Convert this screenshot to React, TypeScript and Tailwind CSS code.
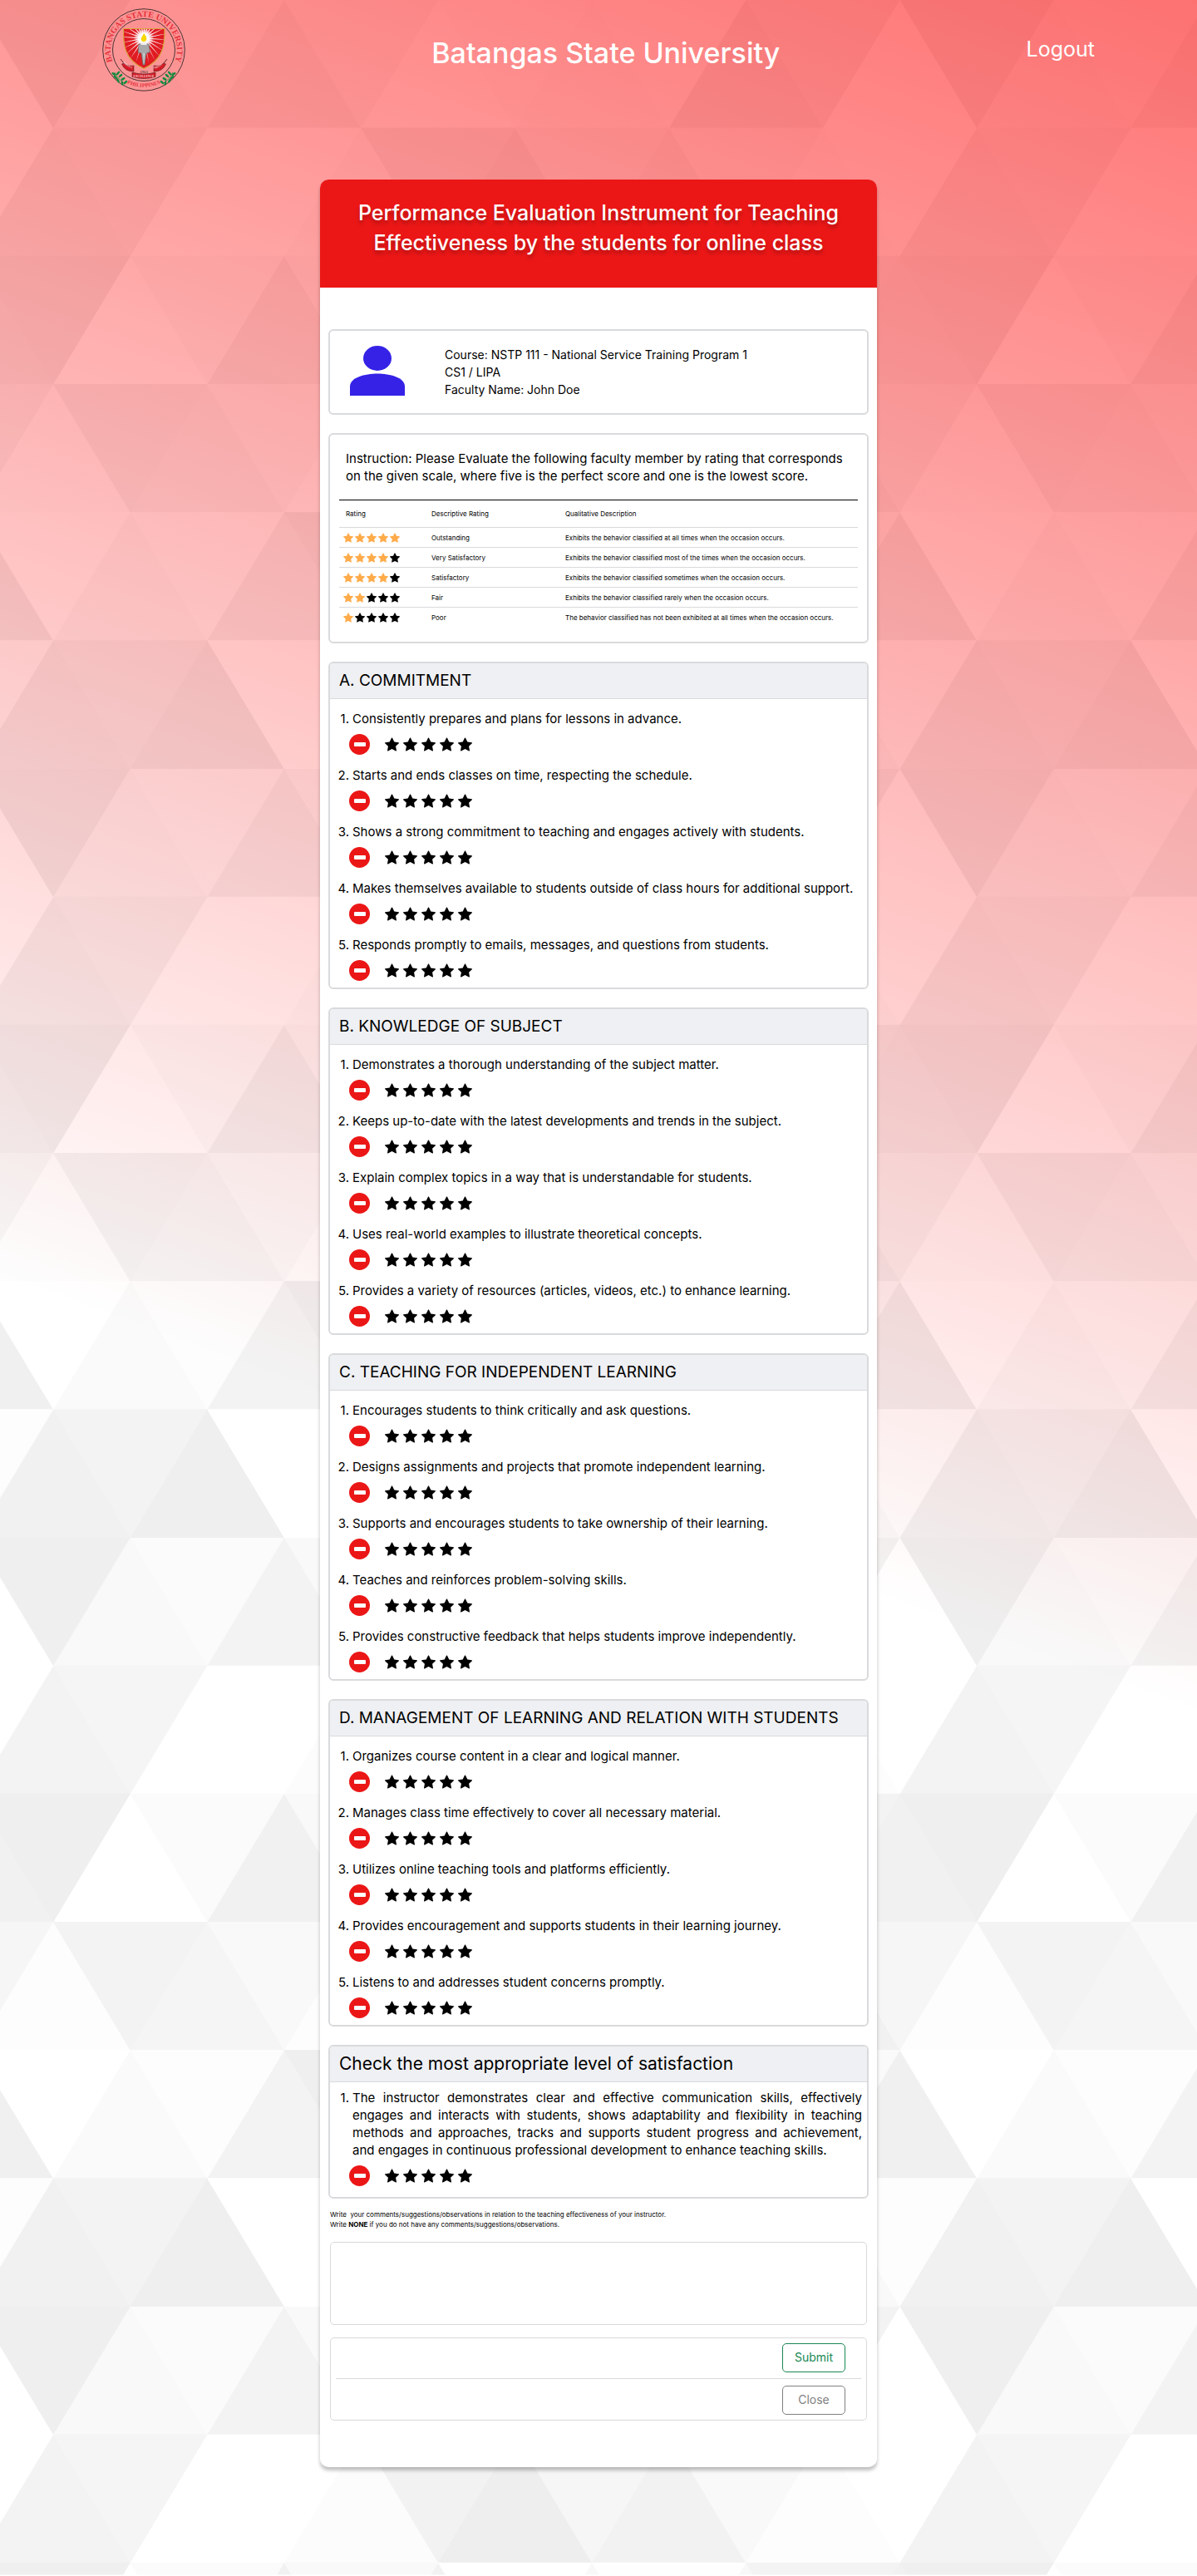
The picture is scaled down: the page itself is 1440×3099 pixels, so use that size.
import { useState } from "react";
import { BsStarFill } from "react-icons/bs";

const SHADES: string[][] = [
  ["#efefef", "#f9f9f9", "#fbfbfb", "#f3f3f3", "#f9f9f9", "#ffffff", "#fdfdfd", "#fbfbfb", "#fdfdfd", "#efefef", "#f3f3f3", "#ffffff"],
  ["#f3f3f3", "#f5f5f5", "#ffffff", "#ffffff", "#fcfcfc", "#f2f2f2", "#eeeeee", "#f6f6f6", "#f2f2f2", "#f9f9f9", "#fdfdfd", "#ffffff"],
  ["#efefef", "#ffffff", "#fbfbfb", "#f1f1f1", "#f9f9f9", "#f2f2f2", "#ffffff", "#f8f8f8", "#fefefe", "#f8f8f8", "#f3f3f3", "#f1f1f1"],
  ["#fdfdfd", "#f3f3f3", "#f5f5f5", "#f9f9f9", "#fdfdfd", "#f6f6f6", "#f3f3f3", "#fafafa", "#f8f8f8", "#ffffff", "#f1f1f1", "#f6f6f6"],
  ["#ffffff", "#fafafa", "#fdfdfd", "#f3f3f3", "#efefef", "#fafafa", "#ffffff", "#f4f4f4", "#fbfbfb", "#f3f3f3", "#fafafa", "#f0f0f0"],
  ["#f1f1f1", "#f3f3f3", "#efefef", "#ffffff", "#ffffff", "#f6f6f6", "#f1f1f1", "#fafafa", "#f3f3f3", "#ffffff", "#f9f9f9", "#fdfdfd"],
];

const TILE_W = 1111;
const TILE_H = 925;
const HALF = TILE_W / 12;
const ROW = TILE_H / 6;

function trianglePoints(row: number, col: number) {
  const x = HALF * col;
  const top = ROW * row;
  const bottom = top + ROW;
  const pointsDown = (row + col) % 2 === 0;
  return pointsDown
    ? `${x},${top} ${x + 2 * HALF},${top} ${x + HALF},${bottom}`
    : `${x},${bottom} ${x + 2 * HALF},${bottom} ${x + HALF},${top}`;
}

function Backdrop() {
  return (
    <div className="absolute inset-0 -z-10" aria-hidden="true">
      <svg className="h-full w-full">
        <defs>
          <pattern id="facets" x="-28" y="0" width={TILE_W} height={TILE_H} patternUnits="userSpaceOnUse">
            {SHADES.map((shades, row) =>
              [-1, ...shades.keys()].map((col) => {
                const fill = shades[(col + 12) % 12];
                return <polygon key={`${row}-${col}`} points={trianglePoints(row, col)} fill={fill} stroke={fill} />;
              }),
            )}
          </pattern>
        </defs>
        <rect width="100%" height="100%" fill="url(#facets)" />
      </svg>
      <div className="absolute inset-0 bg-[linear-gradient(200deg,rgba(255,0,0,0.55)_0px,rgba(255,0,0,0)_1940px)]" />
    </div>
  );
}

function Laurel({ flip }: { flip?: boolean }) {
  const leaves = [
    [14, 79, -60],
    [19, 78, 40],
    [16, 83, -50],
    [22, 81, 50],
    [19, 87, -30],
    [25, 85, 60],
    [24, 90, -10],
    [28, 89, 50],
  ];
  return (
    <g transform={flip ? "translate(100 0) scale(-1 1)" : undefined} fill="#0f8a3c">
      {leaves.map(([x, y, turn]) => (
        <ellipse key={`${x}-${y}`} cx={x} cy={y} rx="1.3" ry="2.9" transform={`rotate(${turn} ${x} ${y})`} />
      ))}
      <path d="M15 77 Q19 86 28 91" fill="none" stroke="#0f8a3c" strokeWidth="0.7" />
    </g>
  );
}

function Seal() {
  const rays = Array.from({ length: 24 }, (_, i) => (i * Math.PI) / 12 + 0.06);
  const shield = "M25.5 24.5 H75 C75.500 45 73 62 50 72.500 C27 62 25 45 25.500 24.500 Z";
  return (
    <svg viewBox="0 0 100 100" className="size-25 shrink-0" role="img" aria-label="Batangas State University seal">
      <defs>
        <path id="seal-top" d="M16.500 72 A40 40 0 1 1 83.500 72" />
        <path id="seal-bottom" d="M13 76 A46 46 0 0 0 87 76" />
        <path id="seal-ribbon-left" d="M25 65 Q31 72 38 72.500" />
        <path id="seal-ribbon-right" d="M62 72.500 Q69 72 75 65" />
        <clipPath id="seal-clip">
          <path d={shield} />
        </clipPath>
        <radialGradient id="seal-glow">
          <stop offset="0" stopColor="#fff" />
          <stop offset="0.5" stopColor="#fff" stopOpacity="0.9" />
          <stop offset="1" stopColor="#fff" stopOpacity="0" />
        </radialGradient>
      </defs>
      <circle cx="50" cy="50" r="49.300" fill="none" stroke="#4b3234" />
      <circle cx="50" cy="50" r="37.500" fill="none" stroke="#4b3234" />
      <text fill="#e5303a" fontSize="10" fontWeight="700" fontFamily="Liberation Serif, serif" textAnchor="middle">
        <textPath href="#seal-top" startOffset="50%">BATANGAS STATE UNIVERSITY</textPath>
      </text>
      <text fill="#e5303a" fontSize="6.500" fontWeight="700" fontFamily="Liberation Serif, serif" textAnchor="middle">
        <textPath href="#seal-bottom" startOffset="50%">PHILIPPINES</textPath>
      </text>
      <path d={shield} fill="#e01b22" />
      <g clipPath="url(#seal-clip)">
        {rays.map((a) => (
          <polygon
            key={a}
            fill="#fff"
            opacity="0.9"
            points={`${50 + 4 * Math.cos(a - 0.2)},${36 + 4 * Math.sin(a - 0.2)} ${50 + 30 * Math.cos(a)},${36 + 30 * Math.sin(a)} ${50 + 4 * Math.cos(a + 0.2)},${36 + 4 * Math.sin(a + 0.2)}`}
          />
        ))}
        <circle cx="50" cy="36" r="12" fill="url(#seal-glow)" />
      </g>
      <path d={shield} fill="none" stroke="#d9a441" strokeWidth="1.200" />
      <path d="M50 30 C52 33 54 35 53 38 C52 41 48 41 47 38 C46 35 49 34 50 30Z" fill="#f9d800" />
      <path d="M44 43 H56 L57 53 L53 54 L51 68 H49 L47 54 L43 53 Z" fill="#a9a9ab" stroke="#5f5f61" strokeWidth="0.600" />
      <path d="M46.500 41 H53.500 V44 H46.500 Z M49.600 54 H50.600 L50.200 66 H49.900 Z" fill="#efefef" />
      <path d="M22 61 Q28 71 38 69 L38 76 Q27 76 23.500 67 L26 66 Z M78 61 Q72 71 62 69 L62 76 Q73 76 76.500 67 L74 66 Z" fill="#d51a26" stroke="#3c1a1c" strokeWidth="0.500" />
      <path d="M36 77 Q50 81 64 77 L64 82.500 Q50 86.500 36 82.500 Z" fill="#d51a26" stroke="#3c1a1c" strokeWidth="0.500" />
      <text x="50" y="77.500" fill="#2e1a1c" fontSize="4.800" fontFamily="Liberation Serif, serif" textAnchor="middle">1903</text>
      <text x="50" y="83.200" fill="#f7dcdc" fontSize="3.600" fontWeight="700" fontFamily="Liberation Serif, serif" textAnchor="middle">EXCELLENCE</text>
      <text fill="#f7dcdc" fontSize="3" fontWeight="700" fontFamily="Liberation Serif, serif">
        <textPath href="#seal-ribbon-left">SERVICE</textPath>
      </text>
      <text fill="#f7dcdc" fontSize="3" fontWeight="700" fontFamily="Liberation Serif, serif">
        <textPath href="#seal-ribbon-right">VIRTUE</textPath>
      </text>
      <Laurel />
      <Laurel flip />
    </svg>
  );
}

const SCALE = [
  { stars: 5, name: "Outstanding", text: "Exhibits the behavior classified at all times when the occasion occurs." },
  { stars: 4, name: "Very Satisfactory", text: "Exhibits the behavior classified most of the times when the occasion occurs." },
  { stars: 4, name: "Satisfactory", text: "Exhibits the behavior classified sometimes when the occasion occurs." },
  { stars: 2, name: "Fair", text: "Exhibits the behavior classified rarely when the occasion occurs." },
  { stars: 1, name: "Poor", text: "The behavior classified has not been exhibited at all times when the occasion occurs." },
];

const SECTIONS = [
  {
    title: "A. COMMITMENT",
    questions: [
      "Consistently prepares and plans for lessons in advance.",
      "Starts and ends classes on time, respecting the schedule.",
      "Shows a strong commitment to teaching and engages actively with students.",
      "Makes themselves available to students outside of class hours for additional support.",
      "Responds promptly to emails, messages, and questions from students.",
    ],
  },
  {
    title: "B. KNOWLEDGE OF SUBJECT",
    questions: [
      "Demonstrates a thorough understanding of the subject matter.",
      "Keeps up-to-date with the latest developments and trends in the subject.",
      "Explain complex topics in a way that is understandable for students.",
      "Uses real-world examples to illustrate theoretical concepts.",
      "Provides a variety of resources (articles, videos, etc.) to enhance learning.",
    ],
  },
  {
    title: "C. TEACHING FOR INDEPENDENT LEARNING",
    questions: [
      "Encourages students to think critically and ask questions.",
      "Designs assignments and projects that promote independent learning.",
      "Supports and encourages students to take ownership of their learning.",
      "Teaches and reinforces problem-solving skills.",
      "Provides constructive feedback that helps students improve independently.",
    ],
  },
  {
    title: "D. MANAGEMENT OF LEARNING AND RELATION WITH STUDENTS",
    questions: [
      "Organizes course content in a clear and logical manner.",
      "Manages class time effectively to cover all necessary material.",
      "Utilizes online teaching tools and platforms efficiently.",
      "Provides encouragement and supports students in their learning journey.",
      "Listens to and addresses student concerns promptly.",
    ],
  },
];

const SATISFACTION_LINES = [
  "The instructor demonstrates clear and effective communication skills, effectively",
  "engages and interacts with students, shows adaptability and flexibility in teaching",
  "methods and approaches, tracks and supports student progress and achievement,",
];

function RatingInput({ label }: { label: string }) {
  const [value, setValue] = useState(0);
  return (
    <div className="flex items-center pl-3" role="group" aria-label={label}>
      <button
        type="button"
        aria-label="Clear rating"
        onClick={() => setValue(0)}
        className="mr-[18px] flex size-[25px] items-center justify-center rounded-full bg-[#eb1717]"
      >
        <span className="h-[5px] w-[14px] rounded-[1px] bg-white" />
      </button>
      <div className="flex gap-[5px]">
        {[1, 2, 3, 4, 5].map((n) => (
          <button
            key={n}
            type="button"
            aria-label={`${n} out of 5`}
            aria-pressed={value === n}
            onClick={() => setValue(n)}
            className={n <= value ? "text-[#ffab4a]" : "text-black"}
          >
            <BsStarFill className="size-[17px]" />
          </button>
        ))}
      </div>
    </div>
  );
}

function Question({ number, label, children }: { number: number; label: string; children: React.ReactNode }) {
  return (
    <li className="flex flex-col gap-2">
      <div className="flex gap-1 text-[15px] leading-[21px]">
        <span className="flex w-3 shrink-0 justify-end">{number}.</span>
        <div className="flex-1">{children}</div>
      </div>
      <RatingInput label={label} />
    </li>
  );
}

function Panel({ title, titleClass, bodyClass, children }: { title: string; titleClass: string; bodyClass: string; children: React.ReactNode }) {
  return (
    <section className="overflow-hidden rounded-md border-2 border-[#d9dadc]">
      <h2 className={`border-b border-[#d9dadc] bg-[#eff0f3] px-[11px] py-[7px] leading-7 ${titleClass}`}>{title}</h2>
      <ol className={bodyClass}>{children}</ol>
    </section>
  );
}

export default function App() {
  return (
    <div className="relative isolate overflow-hidden pb-[130px] font-[Inter,sans-serif] text-black">
      <Backdrop />
      <header className="flex items-center justify-between px-[123px] pt-[10px] text-white">
        <Seal />
        <div className="mt-2 text-[34px] leading-[48px] font-medium">Batangas State University</div>
        <a href="#logout" className="text-[25px]">Logout</a>
      </header>

      <main className="mx-auto mt-[106px] w-full max-w-[670px] rounded-[10px] bg-white shadow-[0_4px_4px_rgba(0,0,0,0.25)]">
        <h1 className="rounded-t-[10px] bg-[#eb1717] px-8 pt-[22px] pb-9 text-center text-[25px] leading-9 font-medium text-white [text-shadow:0_4px_4px_rgba(0,0,0,0.25)]">
          Performance Evaluation Instrument for Teaching
          <br />
          Effectiveness by the students for online class
        </h1>

        <div className="flex flex-col gap-[22px] px-[10px] pt-[50px] pb-[56px]">
          <section className="flex gap-12 rounded-md border-2 border-[#d9dadc] px-6 py-[18px]">
            <svg viewBox="0 0 66 60" className="h-[60px] w-[66px] shrink-0" fill="#3522e6" aria-hidden="true">
              <ellipse cx="33" cy="15" rx="17" ry="15" />
              <path d="M0 60 V49 C0 38 18 33.500 33 33.500 S66 38 66 49 V60 Z" />
            </svg>
            <div className="text-sm leading-[21px]">
              <p>Course: NSTP 111 - National Service Training Program 1</p>
              <p>CS1 / LIPA</p>
              <p>Faculty Name: John Doe</p>
            </div>
          </section>

          <section className="rounded-md border-2 border-[#d9dadc] px-[11px] pt-[18px] pb-[17px]">
            <p className="px-2 text-[15px] leading-[21px]">
              Instruction: Please Evaluate the following faculty member by rating that corresponds
              <br />
              on the given scale, where five is the perfect score and one is the lowest score.
            </p>
            <table className="mt-[18px] w-full table-fixed border-collapse border-t border-black text-left text-[8px] leading-3">
              <thead>
                <tr className="h-[33px] border-b border-[#d9dadc]">
                  <th className="w-[111px] pl-2 font-normal">Rating</th>
                  <th className="w-[161px] font-normal">Descriptive Rating</th>
                  <th className="font-normal">Qualitative Description</th>
                </tr>
              </thead>
              <tbody>
                {SCALE.map((row) => (
                  <tr key={row.name} className="h-6 border-b border-[#d9dadc] last:border-b-0">
                    <td className="pl-[5px]">
                      <span className="flex gap-[2px]" role="img" aria-label={`${row.stars} stars`}>
                        {[1, 2, 3, 4, 5].map((n) => (
                          <BsStarFill key={n} className={n <= row.stars ? "size-3 text-[#ffab4a]" : "size-3 text-black"} />
                        ))}
                      </span>
                    </td>
                    <td>{row.name}</td>
                    <td>{row.text}</td>
                  </tr>
                ))}
              </tbody>
            </table>
          </section>

          {SECTIONS.map((section) => (
            <Panel
              key={section.title}
              title={section.title}
              titleClass="text-[19px]"
              bodyClass="flex flex-col gap-[14px] px-[11px] pt-[13px] pb-2"
            >
              {section.questions.map((question, i) => (
                <Question key={question} number={i + 1} label={question}>
                  {question}
                </Question>
              ))}
            </Panel>
          ))}

          <div>
            <Panel
              title="Check the most appropriate level of satisfaction"
              titleClass="text-[21px]"
              bodyClass="px-[11px] pr-[6px] pt-2 pb-[13px]"
            >
              <Question number={1} label="Overall satisfaction">
                {SATISFACTION_LINES.map((line) => (
                  <span key={line} className="block [text-align-last:justify]">{line} </span>
                ))}
                and engages in continuous professional development to enhance teaching skills.
              </Question>
            </Panel>

            <form className="px-[2px] pt-[13px]" onSubmit={(e) => e.preventDefault()}>
              <label htmlFor="comments" className="block text-[8px] leading-3">
                Write&nbsp; your comments/suggestions/observations in relation to the teaching effectiveness of your instructor.
                <br />
                Write <b>NONE</b> if you do not have any comments/suggestions/observations.
              </label>
              <textarea
                id="comments"
                className="mt-[15px] block h-[100px] w-full resize-none rounded-[5px] border border-[#d9d9d9] p-2 text-sm outline-none"
              />
              <div className="mt-[15px] rounded-[5px] border border-[#d9d9d9] px-[6px] text-sm">
                <div className="flex justify-end border-b border-[#d9d9d9] pt-[6px] pr-[19px] pb-[7px]">
                  <button type="submit" className="h-[35px] w-[76px] rounded-[5px] border border-[#198754] text-[#198754]">
                    Submit
                  </button>
                </div>
                <div className="flex justify-end pt-2 pr-[19px] pb-[6px]">
                  <button type="button" className="h-[35px] w-[76px] rounded-[5px] border border-[#808080] text-[#808080]">
                    Close
                  </button>
                </div>
              </div>
            </form>
          </div>
        </div>
      </main>
    </div>
  );
}
